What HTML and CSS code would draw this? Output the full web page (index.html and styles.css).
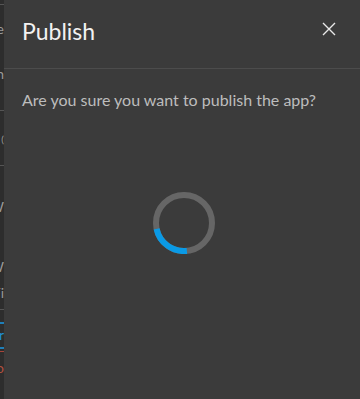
FILE: index.html
```html
<html>
	<head>
		<title>Publish</title>
		<link rel="stylesheet" href="styles.css">
	</head>
	<body>
		<div id="page">
			<div id="behind">
				<div class="rule"></div>
				<p class="peek peek-top">Theme</p>
				<p class="peek peek-n">Open</p>
				<div class="rule rule-2"></div>
				<p class="peek peek-paren">Map (</p>
				<div class="rule rule-3"></div>
				<p class="peek peek-w">New W</p>
				<p class="peek peek-w2">View W</p>
				<p class="peek peek-i">Fi</p>
				<div class="rule rule-4"></div>
				<div class="bar-blue"></div>
				<p class="peek blue">Shar</p>
				<div class="bar-blue bar-2"></div>
				<div class="bar-red"></div>
				<p class="peek red">Undo</p>
			</div>
			<div id="modal">
				<div id="header">
					<h1 id="title">Publish</h1>
					<button id="close" aria-label="Close">
						<svg width="14" height="14" viewBox="0 0 14 14">
							<path d="M1 1L13 13M13 1L1 13" stroke="#e8e8e8" stroke-width="1.4" fill="none"/>
						</svg>
					</button>
				</div>
				<div id="content">
					<p id="question">Are you sure you want to publish the app?</p>
					<div id="loader">
						<svg width="62" height="62" viewBox="0 0 62 62">
							<circle cx="31" cy="31" r="28" stroke="#666666" stroke-width="6" fill="none"/>
							<path d="M3.6 36.8A28 28 0 0 0 33.9 58.9" stroke="#0a9ae6" stroke-width="6" fill="none"/>
						</svg>
					</div>
				</div>
			</div>
		</div>
	</body>
</html>
```

FILE: styles.css
```css
body{
	margin: 0;
	background-color: #2b2b2b;
	font-family: 'Lato', 'Open Sans', sans-serif;
}
#page{
	display: flex;
	width: 360px;
	height: 399px;
	overflow: hidden;
}
#behind{
	width: 4px;
	flex: none;
	overflow: hidden;
	background-color: #2d2d2d;
	display: flex;
	flex-direction: column;
	align-items: flex-end;
}
.rule{
	width: 4px;
	height: 1px;
	margin-top: 4px;
	background-color: #555;
	flex: none;
}
.rule-2{ margin-top: 28px; }
.rule-3{ margin-top: 18px; }
.rule-4{ margin-top: 8px; }
.peek{
	margin: 0;
	font-size: 14px;
	line-height: 16px;
	color: #9a9a9a;
	white-space: nowrap;
	flex: none;
}
.peek-top{ margin-top: 16px; }
.peek-n{ margin-top: 29px; }
.peek-paren{ margin-top: 20px; font-size: 10px; }
.peek-w{ margin-top: 33px; }
.peek-w2{ margin-top: 44px; }
.peek-i{ margin-top: 10px; }
.bar-blue{
	width: 4px;
	height: 2px;
	margin-top: 12px;
	background-color: #1f7fb8;
	flex: none;
}
.bar-2{ margin-top: 4px; }
.blue{ color: #1f8fd0; margin-top: 3px; }
.bar-red{
	width: 4px;
	height: 1px;
	margin-top: 2px;
	background-color: #a8453a;
	flex: none;
}
.red{ color: #b0503f; margin-top: 8px; }
#modal{
	flex: 1;
	background-color: #3b3b3b;
	display: flex;
	flex-direction: column;
}
#header{
	height: 69px;
	border-bottom: 1px solid #4c4c4c;
	display: flex;
	align-items: center;
	justify-content: space-between;
	padding: 0 24px 0 18px;
	box-sizing: border-box;
	flex: none;
}
#title{
	margin: 0;
	font-size: 23px;
	font-weight: 400;
	color: #f2f2f2;
	padding-bottom: 6px;
}
#close{
	background: none;
	border: 0;
	padding: 0;
	width: 14px;
	height: 14px;
	margin-bottom: 10px;
	cursor: pointer;
}
#close svg{
	display: block;
}
#content{
	flex: 1;
	padding: 21px 18px 0 18px;
}
#question{
	margin: 0;
	font-size: 16px;
	color: #bdbdbd;
	line-height: 20px;
}
#loader{
	display: flex;
	justify-content: center;
	margin-top: 82px;
	padding-left: 4px;
}
#loader svg{
	display: block;
}
```
